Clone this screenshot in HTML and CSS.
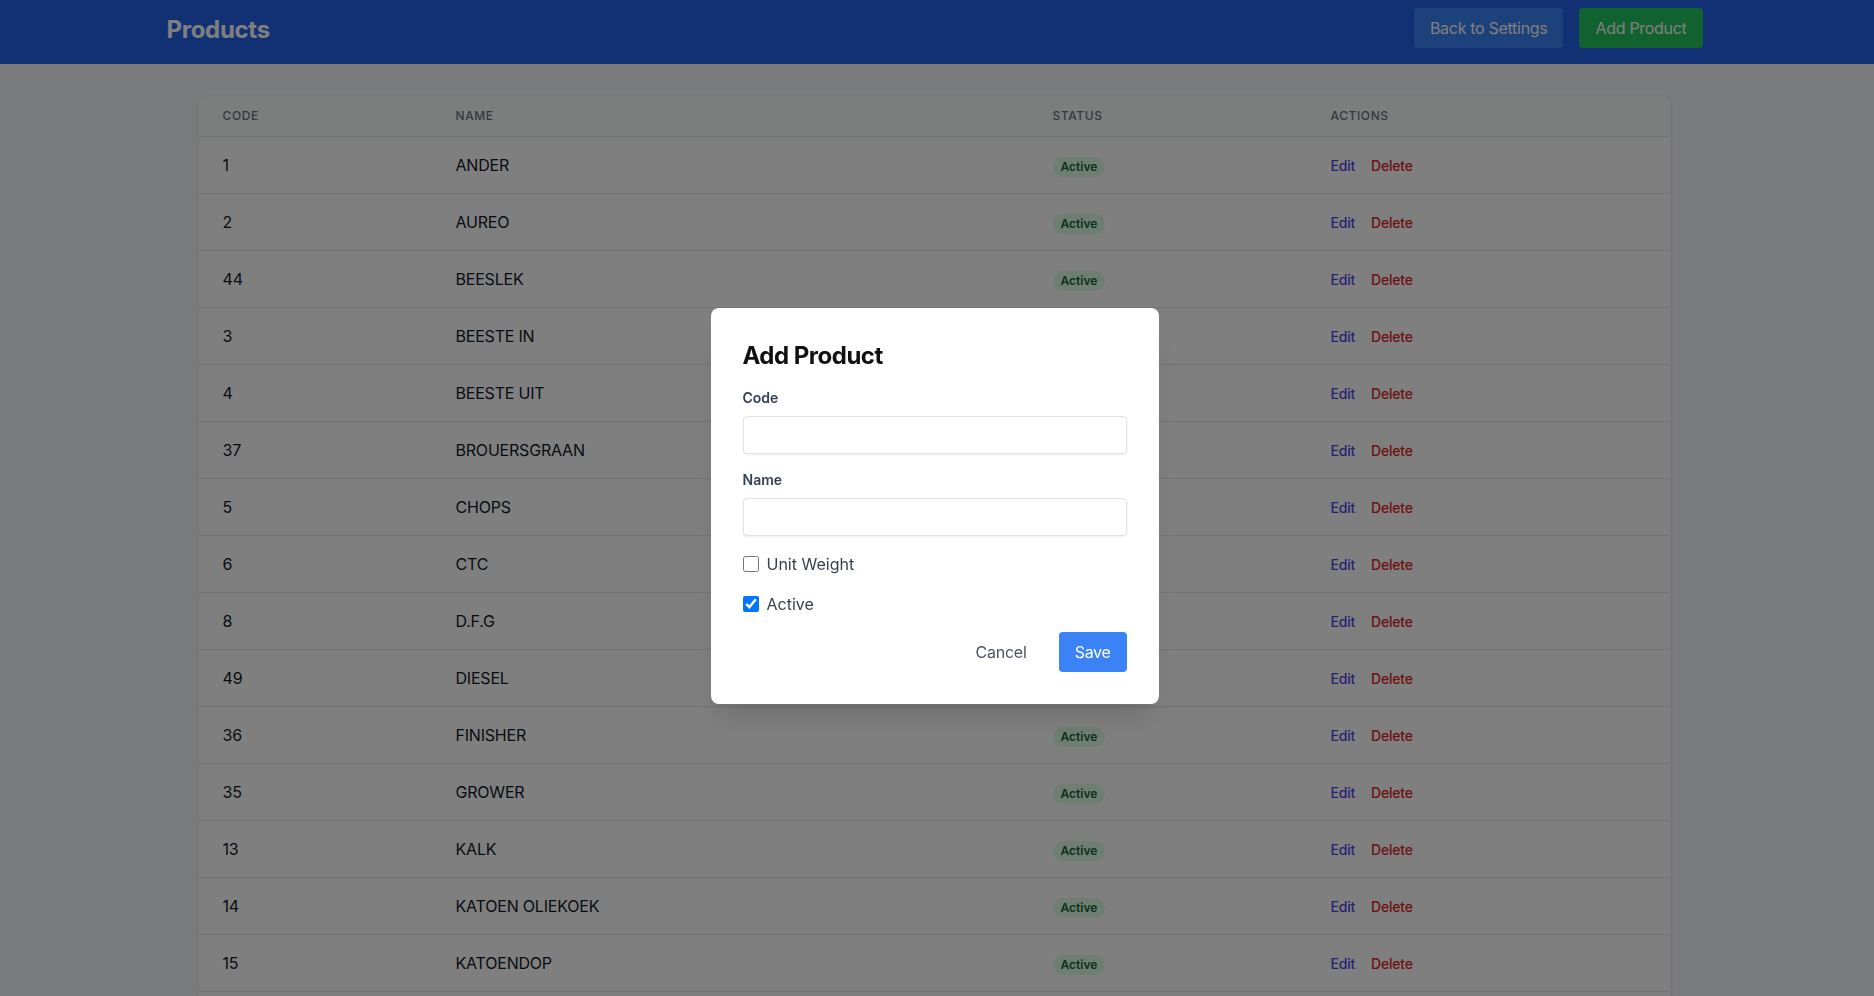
FILE: index.html
```html
<!DOCTYPE html>
<html lang="en">
<head>
<meta charset="utf-8">
<title>Products</title>
<link rel="stylesheet" href="styles.css">
</head>
<body>
<header class="topbar">
  <div class="container topbar-inner">
    <h1 class="page-title">Products</h1>
    <div class="topbar-actions">
      <button class="btn btn-blue">Back to Settings</button>
      <button class="btn btn-green">Add Product</button>
    </div>
  </div>
</header>

<main class="container main">
  <div class="card">
    <table class="table">
      <colgroup>
        <col class="c-code"><col class="c-name"><col class="c-status"><col class="c-actions">
      </colgroup>
      <thead>
        <tr><th>Code</th><th>Name</th><th>Status</th><th>Actions</th></tr>
      </thead>
      <tbody>
        <tr><td>1</td><td>ANDER</td><td><span class="badge">Active</span></td><td><a class="link-edit">Edit</a><a class="link-del">Delete</a></td></tr>
        <tr><td>2</td><td>AUREO</td><td><span class="badge">Active</span></td><td><a class="link-edit">Edit</a><a class="link-del">Delete</a></td></tr>
        <tr><td>44</td><td>BEESLEK</td><td><span class="badge">Active</span></td><td><a class="link-edit">Edit</a><a class="link-del">Delete</a></td></tr>
        <tr><td>3</td><td>BEESTE IN</td><td><span class="badge">Active</span></td><td><a class="link-edit">Edit</a><a class="link-del">Delete</a></td></tr>
        <tr><td>4</td><td>BEESTE UIT</td><td><span class="badge">Active</span></td><td><a class="link-edit">Edit</a><a class="link-del">Delete</a></td></tr>
        <tr><td>37</td><td>BROUERSGRAAN</td><td><span class="badge">Active</span></td><td><a class="link-edit">Edit</a><a class="link-del">Delete</a></td></tr>
        <tr><td>5</td><td>CHOPS</td><td><span class="badge">Active</span></td><td><a class="link-edit">Edit</a><a class="link-del">Delete</a></td></tr>
        <tr><td>6</td><td>CTC</td><td><span class="badge">Active</span></td><td><a class="link-edit">Edit</a><a class="link-del">Delete</a></td></tr>
        <tr><td>8</td><td>D.F.G</td><td><span class="badge">Active</span></td><td><a class="link-edit">Edit</a><a class="link-del">Delete</a></td></tr>
        <tr><td>49</td><td>DIESEL</td><td><span class="badge">Active</span></td><td><a class="link-edit">Edit</a><a class="link-del">Delete</a></td></tr>
        <tr><td>36</td><td>FINISHER</td><td><span class="badge">Active</span></td><td><a class="link-edit">Edit</a><a class="link-del">Delete</a></td></tr>
        <tr><td>35</td><td>GROWER</td><td><span class="badge">Active</span></td><td><a class="link-edit">Edit</a><a class="link-del">Delete</a></td></tr>
        <tr><td>13</td><td>KALK</td><td><span class="badge">Active</span></td><td><a class="link-edit">Edit</a><a class="link-del">Delete</a></td></tr>
        <tr><td>14</td><td>KATOEN OLIEKOEK</td><td><span class="badge">Active</span></td><td><a class="link-edit">Edit</a><a class="link-del">Delete</a></td></tr>
        <tr><td>15</td><td>KATOENDOP</td><td><span class="badge">Active</span></td><td><a class="link-edit">Edit</a><a class="link-del">Delete</a></td></tr>
        <tr class="row-spacer"><td colspan="4"></td></tr>
      </tbody>
    </table>
  </div>
</main>

<div class="overlay">
  <div class="modal">
    <h2 class="modal-title">Add Product</h2>
    <div class="field">
      <label class="field-label" for="code">Code</label>
      <input class="field-input" id="code" type="text">
    </div>
    <div class="field">
      <label class="field-label" for="name">Name</label>
      <input class="field-input" id="name" type="text">
    </div>
    <label class="check-row"><input type="checkbox" class="check"><span>Unit Weight</span></label>
    <label class="check-row"><input type="checkbox" class="check" checked><span>Active</span></label>
    <div class="modal-actions">
      <button class="btn-cancel">Cancel</button>
      <button class="btn btn-save">Save</button>
    </div>
  </div>
</div>
</body>
</html>
```

FILE: styles.css
```css
* { box-sizing: border-box; }
html, body { margin: 0; padding: 0; }
body {
  font-family: Inter, "Noto Sans", sans-serif;
  background: #f3f4f6;
  color: #111827;
  height: 100vh;
  overflow: hidden;
  padding-right: 5px;
}
.container {
  max-width: 1536px;
  margin: 0 auto;
}
.topbar {
  background: #2563eb;
  height: 64px;
  padding-top: 8px;
  margin-right: -5px;
  padding-right: 5px;
}
.topbar-inner {
  display: flex;
  align-items: center;
  justify-content: space-between;
  height: 40px;
}
.page-title {
  margin: 0;
  padding-top: 4px;
  font-size: 24px;
  line-height: 32px;
  font-weight: 700;
  color: #fff;
  letter-spacing: -0.3px;
}
.topbar-actions {
  display: flex;
  gap: 16px;
}
.btn {
  font-family: inherit;
  font-size: 16px;
  line-height: 24px;
  border: 0;
  border-radius: 4px;
  padding: 8px 16px;
  color: #fff;
  letter-spacing: -0.3px;
}
.btn-blue { background: #3b82f6; }
.btn-green { background: #22c55e; }

.main {
  padding: 32px 32px 0;
}
.card {
  background: #fff;
  border-radius: 8px;
  box-shadow: 0 1px 3px rgba(0,0,0,0.1), 0 1px 2px rgba(0,0,0,0.06);
  overflow: hidden;
}
.table {
  width: 100%;
  border-collapse: collapse;
  table-layout: fixed;
}
.c-code { width: 233px; }
.c-name { width: 597px; }
.c-status { width: 278px; }
.table thead { background: #f9fafb; }
.table th {
  text-align: left;
  font-size: 12px;
  line-height: 16px;
  font-weight: 500;
  color: #6b7280;
  text-transform: uppercase;
  letter-spacing: 0.05em;
  padding: 12px 24px;
}
.table tbody tr { border-top: 1px solid #e5e7eb; }
.table td {
  padding: 16px 24px;
  font-size: 16px;
  line-height: 24px;
  color: #111827;
  white-space: nowrap;
  vertical-align: middle;
  letter-spacing: -0.2px;
}
.table .row-spacer td { height: 56px; }
.badge {
  display: inline-flex;
  padding: 0 8px;
  font-size: 12px;
  line-height: 20px;
  font-weight: 600;
  border-radius: 9999px;
  background: #dcfce7;
  color: #166534;
  letter-spacing: 0;
  vertical-align: middle;
}
.link-edit, .link-del {
  font-size: 14px;
  line-height: 20px;
  font-weight: 500;
}
.link-edit { color: #4f46e5; margin-right: 16px; }
.link-del { color: #dc2626; }

.overlay {
  position: fixed;
  inset: 0;
  background: rgba(0,0,0,0.5);
  display: flex;
  align-items: center;
  justify-content: center;
  padding-top: 16px;
  padding-right: 5px;
}
.modal {
  width: 448px;
  background: #fff;
  border-radius: 8px;
  padding: 32px;
  box-shadow: 0 20px 25px -5px rgba(0,0,0,0.1), 0 10px 10px -5px rgba(0,0,0,0.04);
}
.modal-title {
  margin: 0 0 16px;
  font-size: 24px;
  line-height: 32px;
  font-weight: 700;
  color: #111;
  letter-spacing: -0.5px;
}
.field { margin-bottom: 16px; }
.field-label {
  display: block;
  font-size: 14px;
  line-height: 20px;
  font-weight: 600;
  color: #374151;
  margin-bottom: 8px;
}
.field-input {
  display: block;
  width: 100%;
  height: 38px;
  border: 1px solid #e0e2e6;
  border-radius: 4px;
  box-shadow: 0 1px 2px rgba(0,0,0,0.08);
  font-family: inherit;
  font-size: 14px;
  padding: 8px 12px;
}
.check-row {
  display: flex;
  align-items: center;
  height: 24px;
  margin-bottom: 16px;
  font-size: 16px;
  color: #374151;
}
.check {
  width: 16px;
  height: 16px;
  margin: 0 8px 0 0;
}
.modal-actions {
  display: flex;
  justify-content: flex-end;
  align-items: center;
  gap: 16px;
}
.btn-cancel {
  font-family: inherit;
  font-size: 16px;
  line-height: 24px;
  background: transparent;
  border: 0;
  color: #4b5563;
  padding: 8px 16px;
  letter-spacing: -0.2px;
}
.btn-save { background: #3b82f6; }
```
